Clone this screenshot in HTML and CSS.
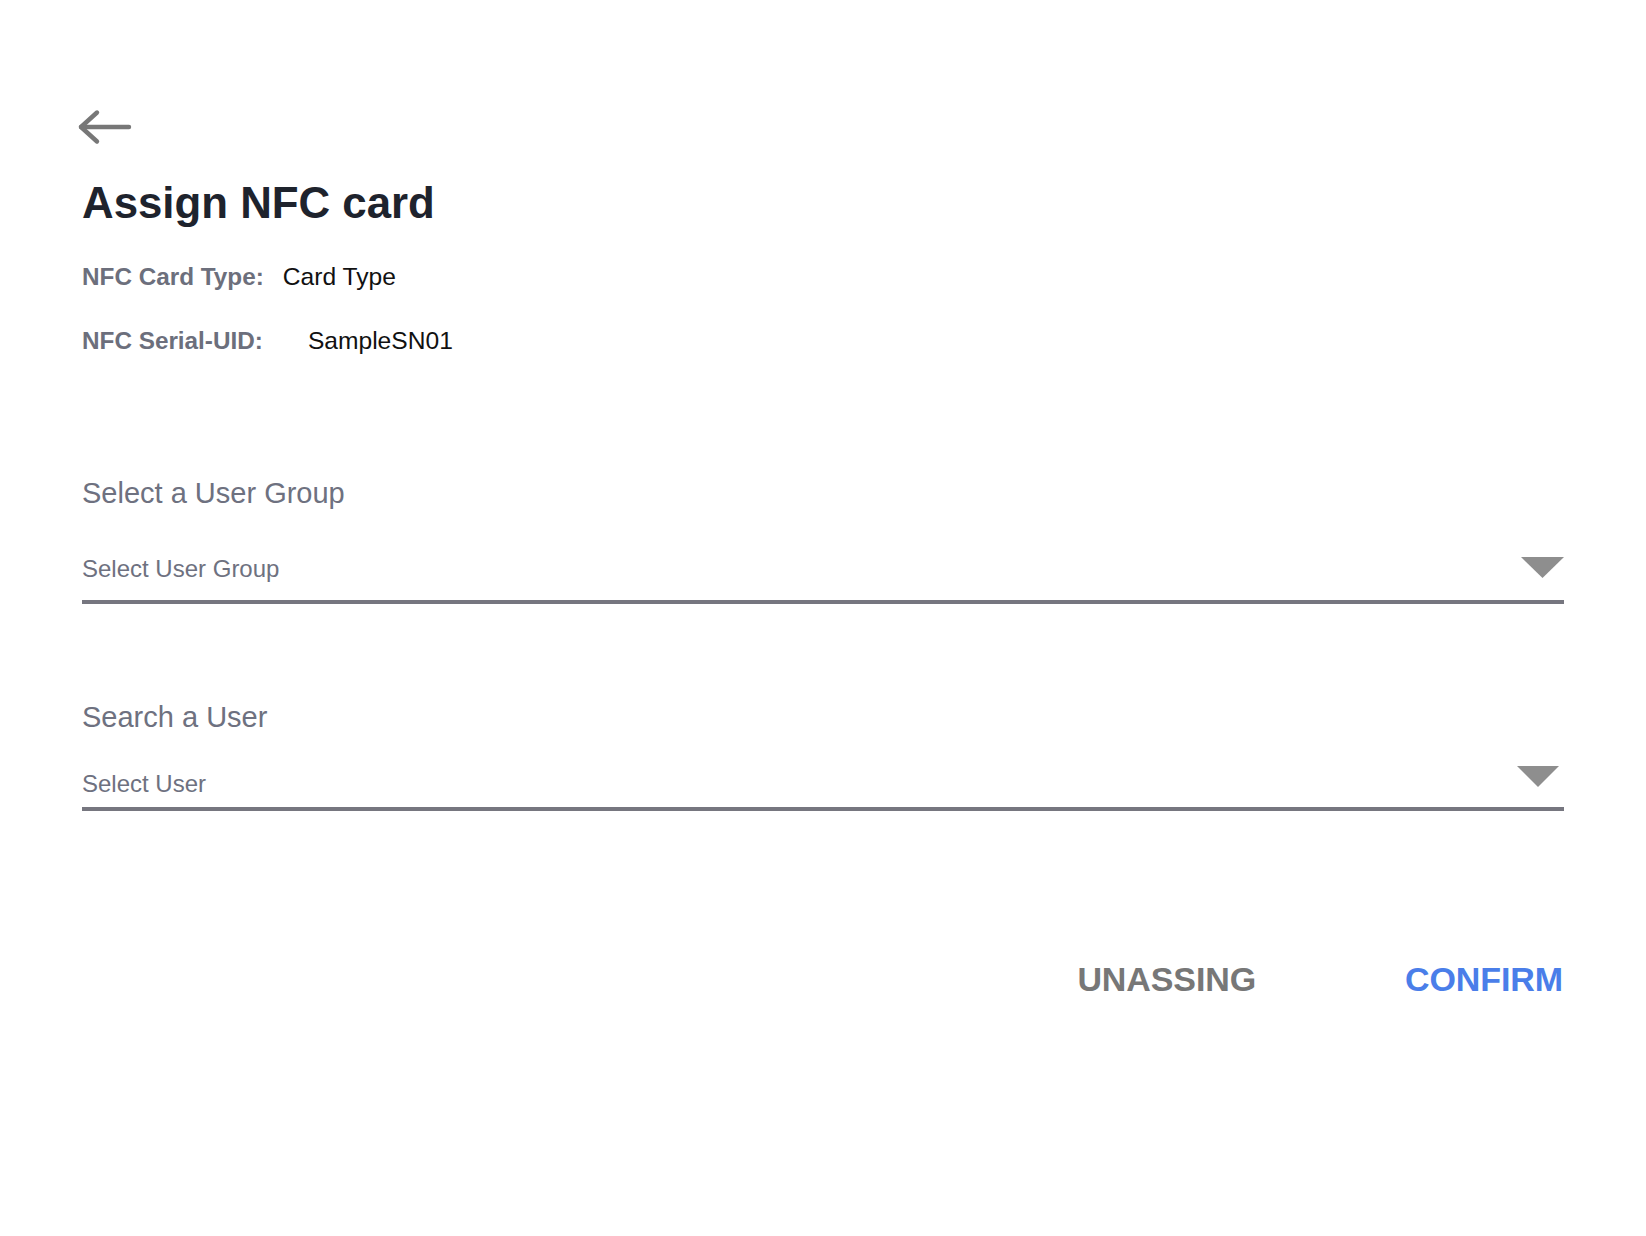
FILE: index.html
```html
<!DOCTYPE html>
<html lang="en">
<head>
<meta charset="utf-8">
<title>Assign NFC card</title>
<link rel="stylesheet" href="styles.css">
</head>
<body>
<main class="page">
  <button class="back" aria-label="Back">
    <svg width="56" height="40" viewBox="0 0 56 40" fill="none" stroke="#777777" stroke-width="4.4" stroke-linecap="round" stroke-linejoin="round">
      <path d="M5 20 H53"/>
      <path d="M21 5.5 L5 20 L21 34.5"/>
    </svg>
  </button>
  <h1 class="title">Assign NFC card</h1>

  <div class="info">
    <div class="info-row">
      <span class="info-label">NFC Card Type:</span>
      <span class="info-value">Card Type</span>
    </div>
    <div class="info-row">
      <span class="info-label">NFC Serial-UID:</span>
      <span class="info-value info-value--wide">SampleSN01</span>
    </div>
  </div>

  <section class="field-group field-group--first">
    <div class="field-title">Select a User Group</div>
    <div class="select select--group">
      <span class="select-text">Select User Group</span>
      <svg class="caret caret--group" width="43" height="21" viewBox="0 0 43 21"><path d="M0 0 H43 L21.5 21 Z" fill="#8e8e8e"/></svg>
    </div>
  </section>

  <section class="field-group field-group--second">
    <div class="field-title">Search a User</div>
    <div class="select select--user">
      <span class="select-text">Select User</span>
      <svg class="caret caret--user" width="42" height="21" viewBox="0 0 42 21"><path d="M0 0 H42 L21 21 Z" fill="#8e8e8e"/></svg>
    </div>
  </section>

  <div class="actions">
    <button class="btn btn--muted">UNASSING</button>
    <button class="btn btn--primary">CONFIRM</button>
  </div>
</main>
</body>
</html>
```

FILE: styles.css
```css
* {
  box-sizing: border-box;
}

html, body {
  margin: 0;
  padding: 0;
  background: #ffffff;
}

body {
  font-family: "Liberation Sans", Arial, Helvetica, sans-serif;
  color: #111111;
}

.page {
  width: 1646px;
  min-height: 1236px;
  padding: 107px 82px 0 82px;
  display: flex;
  flex-direction: column;
}

.back {
  display: block;
  width: 56px;
  height: 40px;
  padding: 0;
  margin: 0 0 0 -6px;
  border: 0;
  background: transparent;
  cursor: pointer;
}

.back svg {
  display: block;
}

.title {
  margin: 31px 0 0 0;
  font-size: 43.8px;
  line-height: 50px;
  font-weight: 700;
  color: #1e232d;
}

.info {
  display: flex;
  flex-direction: column;
  gap: 34px;
  margin-top: 34px;
}

.info-row {
  display: flex;
  align-items: baseline;
  font-size: 24px;
  line-height: 30px;
}

.info-label {
  font-weight: 700;
  font-size: 24.3px;
  color: #6c6f7c;
}

.info-value {
  margin-left: 19px;
  font-size: 24.6px;
  color: #111111;
}

.info-value--wide {
  margin-left: 45px;
}

.field-group {
  display: flex;
  flex-direction: column;
}

.field-group--first {
  margin-top: 119px;
}

.field-group--second {
  margin-top: 95px;
}

.field-title {
  font-size: 29px;
  line-height: 36px;
  color: #6e7180;
}

.select {
  display: flex;
  justify-content: space-between;
  align-items: flex-start;
  border-bottom: 4px solid #76767f;
}

.select--group {
  margin-top: 43px;
  padding-bottom: 16px;
}

.select--user {
  margin-top: 34px;
  padding-bottom: 8px;
}

.select-text {
  font-size: 24px;
  line-height: 30px;
  color: #6e7180;
}

.caret {
  display: block;
  flex: none;
}

.caret--group {
  margin-top: 3px;
}

.caret--user {
  margin-top: -3px;
  margin-right: 5px;
}

.actions {
  display: flex;
  justify-content: flex-end;
  gap: 149px;
  margin-top: 148px;
  padding-right: 1px;
}

.btn {
  padding: 0;
  margin: 0;
  border: 0;
  background: transparent;
  font-family: "Liberation Sans", Arial, Helvetica, sans-serif;
  font-size: 34px;
  line-height: 40px;
  font-weight: 700;
  letter-spacing: -0.1px;
  cursor: pointer;
}

.btn--muted {
  color: #777777;
}

.btn--primary {
  color: #4a7ee9;
}
```
